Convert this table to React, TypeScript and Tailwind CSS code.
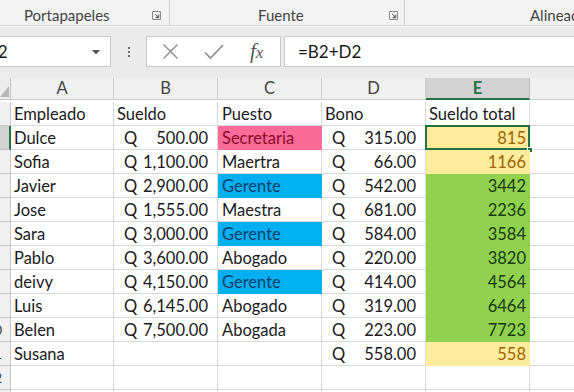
import React from "react";

type Fill = "pink" | "blue" | "green" | "yellow" | null;

type Row = {
  n: number;
  a?: string;
  b?: string;
  c?: string;
  cFill?: Fill;
  d?: string;
  e?: string;
  eFill?: Fill;
  header?: boolean;
};

const rows: Row[] = [
  { n: 1, a: "Empleado", b: "Sueldo", c: "Puesto", d: "Bono", e: "Sueldo total", header: true },
  { n: 2, a: "Dulce", b: "500.00", c: "Secretaria", cFill: "pink", d: "315.00", e: "815", eFill: "yellow" },
  { n: 3, a: "Sofia", b: "1,100.00", c: "Maertra", d: "66.00", e: "1166", eFill: "yellow" },
  { n: 4, a: "Javier", b: "2,900.00", c: "Gerente", cFill: "blue", d: "542.00", e: "3442", eFill: "green" },
  { n: 5, a: "Jose", b: "1,555.00", c: "Maestra", d: "681.00", e: "2236", eFill: "green" },
  { n: 6, a: "Sara", b: "3,000.00", c: "Gerente", cFill: "blue", d: "584.00", e: "3584", eFill: "green" },
  { n: 7, a: "Pablo", b: "3,600.00", c: "Abogado", d: "220.00", e: "3820", eFill: "green" },
  { n: 8, a: "deivy", b: "4,150.00", c: "Gerente", cFill: "blue", d: "414.00", e: "4564", eFill: "green" },
  { n: 9, a: "Luis", b: "6,145.00", c: "Abogado", d: "319.00", e: "6464", eFill: "green" },
  { n: 10, a: "Belen", b: "7,500.00", c: "Abogada", d: "223.00", e: "7723", eFill: "green" },
  { n: 11, a: "Susana", d: "558.00", e: "558", eFill: "yellow" },
  { n: 12 },
  { n: 13 },
];

const fillCls: Record<string, string> = {
  pink: "bg-[#f96b98] border-[#f96b98] text-[#8a0a2c]",
  blue: "bg-[#00b0f0] border-[#00b0f0] text-[#133f6e]",
  green: "bg-[#92d050] border-[#92d050] text-[#143a0d]",
  yellow: "bg-[#ffeb9c] border-[#ffeb9c] text-[#9c6500]",
};

function Launcher() {
  return (
    <svg width="9" height="9" viewBox="0 0 9 9" className="shrink-0">
      <path d="M0.5 0.5h8v8h-8z" fill="none" stroke="#8a8a8a" />
      <path d="M3 3l3.5 3.5M6.8 3.8v3h-3z" stroke="#6a6a6a" fill="#6a6a6a" strokeWidth="0.9" />
    </svg>
  );
}

function Accounting({ value }: { value?: string }) {
  if (!value) return <div className="border-b border-r border-[#d9d9d9]" />;
  return (
    <div className="flex items-center justify-between border-b border-r border-[#d9d9d9] pl-[10px] pr-[9px] pt-[2px]">
      <span>Q</span>
      <span>{value}</span>
    </div>
  );
}

export default function App() {
  return (
    <div className="w-[574px] h-[392px] overflow-hidden bg-white font-['Lato','Liberation_Sans',sans-serif] text-[#1a1a1a]">
      {/* ribbon group captions */}
      <div className="flex h-[26px] bg-[#f3f3f3] border-b border-[#d4d4d4] text-[15px] text-[#444]">
        <div className="flex w-[170px] shrink-0 items-center pl-[24px] pr-[8px] border-r border-[#d0d0d0] pt-[6px]">
          <span>Portapapeles</span>
          <span className="ml-auto">
            <Launcher />
          </span>
        </div>
        <div className="flex w-[235px] shrink-0 items-center pl-[88px] pr-[6px] border-r border-[#d0d0d0] pt-[6px]">
          <span>Fuente</span>
          <span className="ml-auto">
            <Launcher />
          </span>
        </div>
        <div className="flex shrink-0 items-center pl-[125px] pt-[6px] whitespace-nowrap">
          <span>Alineación</span>
        </div>
      </div>

      {/* formula bar */}
      <div className="h-[52px] bg-[#ebebeb] border-t border-[#f8f8f8] pt-[9px]">
        <div className="flex h-[31px] items-stretch">
          <div className="relative flex w-[111px] shrink-0 items-center overflow-hidden bg-white border border-l-0 border-[#c8c8c8]">
            <span className="ml-[-12px] text-[17px]">E2</span>
            <svg width="8" height="5" viewBox="0 0 8 5" className="absolute right-[10px] top-[13px]">
              <path d="M0 0h8L4 4.5z" fill="#555" />
            </svg>
          </div>
          <div className="flex w-[35px] shrink-0 flex-col items-center justify-center gap-[2px]">
            <span className="h-[2px] w-[2px] bg-[#707070]" />
            <span className="h-[2px] w-[2px] bg-[#707070]" />
            <span className="h-[2px] w-[2px] bg-[#707070]" />
          </div>
          <div className="flex w-[135px] shrink-0 items-center bg-white border border-[#c8c8c8]">
            <svg width="17" height="17" viewBox="0 0 17 17" className="ml-[15px]">
              <path d="M1.5 1.5l14 14M15.5 1.5l-14 14" stroke="#8c8c8c" strokeWidth="1.4" />
            </svg>
            <svg width="20" height="16" viewBox="0 0 20 16" className="ml-[25px]">
              <path d="M1 8.5l5.5 5.5L19 1" fill="none" stroke="#8c8c8c" strokeWidth="1.6" />
            </svg>
            <span className="ml-[26px] text-[21px] italic leading-none text-[#555] font-['Liberation_Serif',serif]">
              f<span className="text-[17px]">x</span>
            </span>
          </div>
          <div className="ml-[3px] flex flex-1 items-center bg-white border border-r-0 border-[#c8c8c8] pl-[13px] text-[17px]">
            =B2+D2
          </div>
        </div>
      </div>

      {/* sheet grid */}
      <div className="grid grid-cols-[11px_103px_104px_104px_104px_104px_1fr] auto-rows-[24px] text-[16.5px] leading-none">
        {/* column headings */}
        <div className="h-[22px] overflow-hidden bg-[#ececec] border-b border-r border-[#c4c4c4] relative">
          <svg width="11" height="22" viewBox="0 0 11 22" className="absolute left-0 top-0">
            <path d="M0 19L9 8v11z" fill="#b5b5b5" />
          </svg>
        </div>
        {["A", "B", "C", "D"].map((h) => (
          <div
            key={h}
            className="flex h-[22px] items-center justify-center bg-[#f0f0f0] border-b border-r border-[#cdcdcd] text-[#444]"
          >
            {h}
          </div>
        ))}
        <div className="flex h-[22px] items-center justify-center bg-[#d2d2d2] border-b-2 border-r border-b-[#217346] border-r-[#bdbdbd] font-bold text-[#217346]">
          E
        </div>
        <div className="h-[22px] bg-[#f0f0f0] border-b border-[#cdcdcd]" />

        {rows.map((r) => {
          const selected = r.n === 2;
          return (
            <React.Fragment key={r.n}>
              <div
                className={`overflow-hidden border-b ${
                  selected
                    ? "bg-[#d2d2d2] border-r-2 border-r-[#217346] border-b-[#bdbdbd]"
                    : "bg-[#f0f0f0] border-r border-[#c8c8c8]"
                }`}
              >
                <div className="ml-[-22px] flex h-full w-[32px] items-center justify-center text-[14px] text-[#444]">
                  {r.n}
                </div>
              </div>
              <div className="flex items-center border-b border-r border-[#d9d9d9] pl-[3px] pt-[2px] whitespace-nowrap">
                {r.a}
              </div>
              {r.header ? (
                <div className="flex items-center border-b border-r border-[#d9d9d9] pl-[3px] pt-[2px]">{r.b}</div>
              ) : (
                <Accounting value={r.b} />
              )}
              <div
                className={`flex items-center border-b border-r pl-[4px] pt-[2px] whitespace-nowrap ${
                  r.cFill ? fillCls[r.cFill] : "border-[#d9d9d9]"
                }`}
              >
                {r.c}
              </div>
              {r.header ? (
                <div className="flex items-center border-b border-r border-[#d9d9d9] pl-[3px] pt-[2px]">{r.d}</div>
              ) : (
                <Accounting value={r.d} />
              )}
              <div
                className={`relative flex items-center border-b border-r pt-[2px] whitespace-nowrap ${
                  r.header ? "justify-start pl-[3px]" : "justify-end pr-[3px]"
                } ${r.eFill ? fillCls[r.eFill] : "border-[#d9d9d9]"}`}
              >
                {r.e}
                {selected && (
                  <>
                    <span className="pointer-events-none absolute inset-[-1px] border-2 border-[#217346]" />
                    <span className="absolute bottom-[-4px] right-[-4px] h-[6px] w-[6px] bg-[#217346] border border-white" />
                  </>
                )}
              </div>
              <div className="border-b border-[#d9d9d9]" />
            </React.Fragment>
          );
        })}
      </div>
    </div>
  );
}
